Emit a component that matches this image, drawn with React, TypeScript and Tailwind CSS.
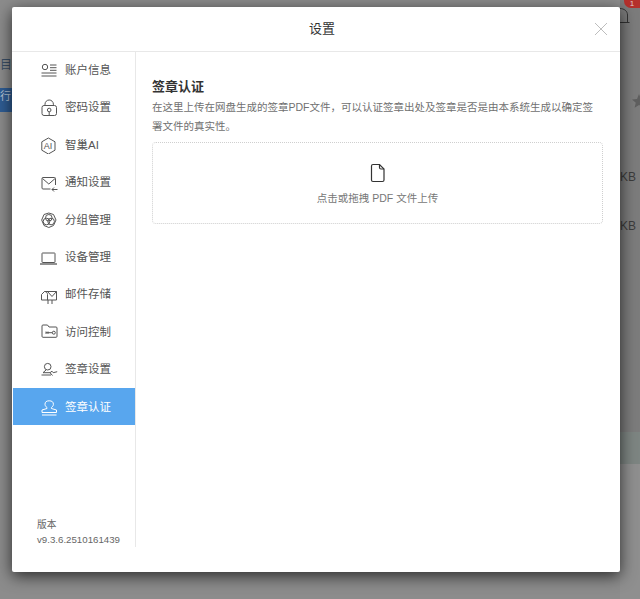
const cjk = "font-['Helvetica_Neue','Liberation_Sans','Noto_Sans_CJK_SC',sans-serif]";

function Icon({ children }: { children: React.ReactNode }) {
  return (
    <svg width="18" height="18" viewBox="0 0 18 18" fill="none" stroke="currentColor" strokeWidth="1" className="shrink-0">
      {children}
    </svg>
  );
}

const menu = [
  {
    label: "账户信息",
    icon: (
      <Icon>
        <circle cx="5" cy="5" r="2.700" />
        <path d="M10 3h6.500M10 5.700h6.500M10 8.300h6.500M1.500 11h15M1.500 14h15" />
      </Icon>
    ),
  },
  {
    label: "密码设置",
    icon: (
      <Icon>
        <rect x="2" y="6.500" width="14.500" height="10" rx="2" />
        <path d="M5 6.500V5.200a4.200 4.200 0 0 1 8.400 0v1.300" />
        <circle cx="9.200" cy="11" r="1.800" />
        <path d="M9.200 12.800v3.700" />
      </Icon>
    ),
  },
  {
    label: "智巢AI",
    icon: (
      <Icon>
        <path d="M8.400 2 15 5.800v8.400L8.400 18l-6.600-3.800V5.800z" />
        <text x="3.800" y="13.300" fontSize="9" fontFamily="Liberation Sans" fill="currentColor" stroke="none">AI</text>
      </Icon>
    ),
  },
  {
    label: "通知设置",
    icon: (
      <Icon>
        <path d="M10.500 15H3a1 1 0 0 1-1-1V4.500a1 1 0 0 1 1-1h11.500a1 1 0 0 1 1 1V11" />
        <path d="m2.500 4.500 6.300 5.500 6.300-5.500" />
        <path d="M17.500 15.500h-5.500M14 13.500l-2 2 2 2" />
      </Icon>
    ),
  },
  {
    label: "分组管理",
    icon: (
      <Icon>
        <path d="M8.800 2 13.500 3.500 16 9l-2.500 5.500-4.700 2-4.800-2L1.700 9l2.300-5.500z" />
        <circle cx="8.800" cy="6.800" r="3.300" />
        <circle cx="6.500" cy="10.500" r="3.300" />
        <circle cx="11.100" cy="10.500" r="3.300" />
      </Icon>
    ),
  },
  {
    label: "设备管理",
    icon: (
      <Icon>
        <rect x="2" y="4" width="13" height="9.500" rx="0.500" />
        <path d="M0 15h17" strokeWidth="1.300" />
      </Icon>
    ),
  },
  {
    label: "邮件存储",
    icon: (
      <Icon>
        <path d="M1.500 14V8.500L4.500 5.500h12v8.500z" />
        <path d="M4.500 5.500c2 0 3 1.500 3 3V14M7.500 5.500l4.500 5 4.500-5M8 14v4M12 14v4" />
      </Icon>
    ),
  },
  {
    label: "访问控制",
    icon: (
      <Icon>
        <path d="M2 3a1 1 0 0 1 1-1h4.500L9 4h7a1 1 0 0 1 1 1v8.300a1 1 0 0 1-1 1H3a1 1 0 0 1-1-1z" />
        <circle cx="13.800" cy="9.700" r="1.500" />
        <path d="M6 9.700h6.300M6 8.500v2.400M8 8.500v2.400" />
      </Icon>
    ),
  },
  {
    label: "签章设置",
    icon: (
      <Icon>
        <circle cx="7.700" cy="5.700" r="3.300" />
        <path d="M6 9 3 11.700h7l2-1.500 1.200 1.500 4-1" />
        <path d="M1.500 14h9.500M10 11.700l2.500 2.800" />
      </Icon>
    ),
  },
  {
    label: "签章认证",
    icon: (
      <Icon>
        <path d="M7 10.500V9.500C5.800 8.700 5 7.600 5 6.300a4.200 3.500 0 0 1 8.400 0c0 1.300-.8 2.400-2 3.200v1L16.500 12v2.500H2V12z" />
        <path d="M2 17h14.500" />
      </Icon>
    ),
  },
];

export default function App() {
  return (
    <div className={`relative h-[599px] w-[640px] overflow-hidden bg-[#8c8c8c] ${cjk}`}>
      {/* PAGE BEHIND THE MASK */}
      <div className="flex h-full w-full justify-between text-[12px] text-[#3c3c3c]">
        <div className="flex w-[12px] flex-col overflow-hidden">
          <div className="mt-[56px] h-[14px] text-[#3a4f66]">目</div>
          <div className="mt-[18px] h-[24px] w-[12px] bg-[#2f5d94] text-[11px] text-[#b9c6d6]">行</div>
        </div>
        <div className="flex w-[20px] flex-col bg-[#7c7c7c]">
          <div className="mt-[170px] text-[12px] leading-[14px]">KB</div>
          <div className="mt-[35px] text-[12px] leading-[14px]">KB</div>
          <div className="mt-[199px] h-[32px] bg-[#7d8582]" />
          <div className="flex-1 bg-[#8f8f8f]" />
        </div>
      </div>

      {/* BELL */}
      <svg width="12" height="17" viewBox="0 0 12 17" fill="none" stroke="#333" className="absolute left-[620px] top-[7px]">
        <path d="M0 15.500h9.500M7.500 15V8C7.500 4 4 1.500 0 1.500" />
      </svg>
      <div className="absolute left-[624px] top-0 flex h-[8px] w-[16px] items-end justify-center overflow-hidden rounded-bl-[7px] bg-[#b5302c] text-[8px] leading-[9px] text-[#e6c9c8]">
        1
      </div>
      <svg width="10" height="14" viewBox="0 0 10 14" className="absolute left-[632px] top-[94px]">
        <path d="M7 0l2 5 5 .4-3.800 3.300 1.200 5L7 11l-4.400 2.700 1.200-5L0 5.400 5 5z" fill="#5f5f5f" />
      </svg>

      {/* MODAL */}
      <div className="absolute left-[12px] top-[7px] flex h-[565px] w-[608px] flex-col rounded-[2px] bg-white shadow-[0_4px_16px_rgba(0,0,0,0.7)]">
        <div className="relative flex h-[45px] shrink-0 items-center justify-center border-b border-[#e8e8e8] pl-[12px] text-[13px] text-[#333]">
          设置
          <svg width="14" height="14" viewBox="0 0 14 14" stroke="#bdbdbd" className="absolute right-[12px] top-[15px]">
            <path d="M1 1l12 12M13 1 1 13" />
          </svg>
        </div>

        <div className="flex min-h-0 flex-1">
          {/* SIDEBAR */}
          <div className="-mt-[1px] mb-[25px] flex w-[124px] shrink-0 flex-col border-r border-[#e8e8e8] pl-px">
            {menu.map((item, i) => (
              <div
                key={item.label}
                className={`flex h-[37.4px] items-center gap-[7px] pl-[27px] pt-[2px] text-[11.5px] ${
                  i === 9 ? "bg-[#58a6ee] text-white" : "text-[#555]"
                }`}
              >
                {item.icon}
                <span>{item.label}</span>
              </div>
            ))}
            <div className="mt-auto pl-[24px] text-[9.7px] leading-[15px] text-[#666]">
              <div>版本</div>
              <div>v9.3.6.2510161439</div>
            </div>
          </div>

          {/* CONTENT */}
          <div className="min-w-0 flex-1 pl-[16px] pr-[17px] pt-[26px]">
            <h2 className="text-[13px] font-bold leading-[17px] text-[#333]">签章认证</h2>
            <p className="mt-[3px] text-[10.5px] leading-[19px] text-[#707070]">
              在这里上传在网盘生成的签章PDF文件，可以认证签章出处及签章是否是由本系统生成以确定签署文件的真实性。
            </p>
            <div className="mt-[6px] flex h-[82px] flex-col items-center justify-center rounded-[4px] border border-dotted border-[#cfcfcf] pt-[2px]">
              <svg width="18" height="20" viewBox="0 0 18 20" fill="none" stroke="#333" strokeWidth="1.200">
                <path d="M4 1.500h6.500l4.500 4.500v11a1.500 1.500 0 0 1-1.500 1.500h-9.500a1.500 1.500 0 0 1-1.500-1.500v-14a1.500 1.500 0 0 1 1.500-1.500z" />
                <path d="M10.500 1.500v3a1.500 1.500 0 0 0 1.500 1.500h3" />
              </svg>
              <p className="mt-[8px] text-[10.5px] leading-[14px] text-[#777]">点击或拖拽 PDF 文件上传</p>
            </div>
          </div>
        </div>
      </div>
    </div>
  );
}
